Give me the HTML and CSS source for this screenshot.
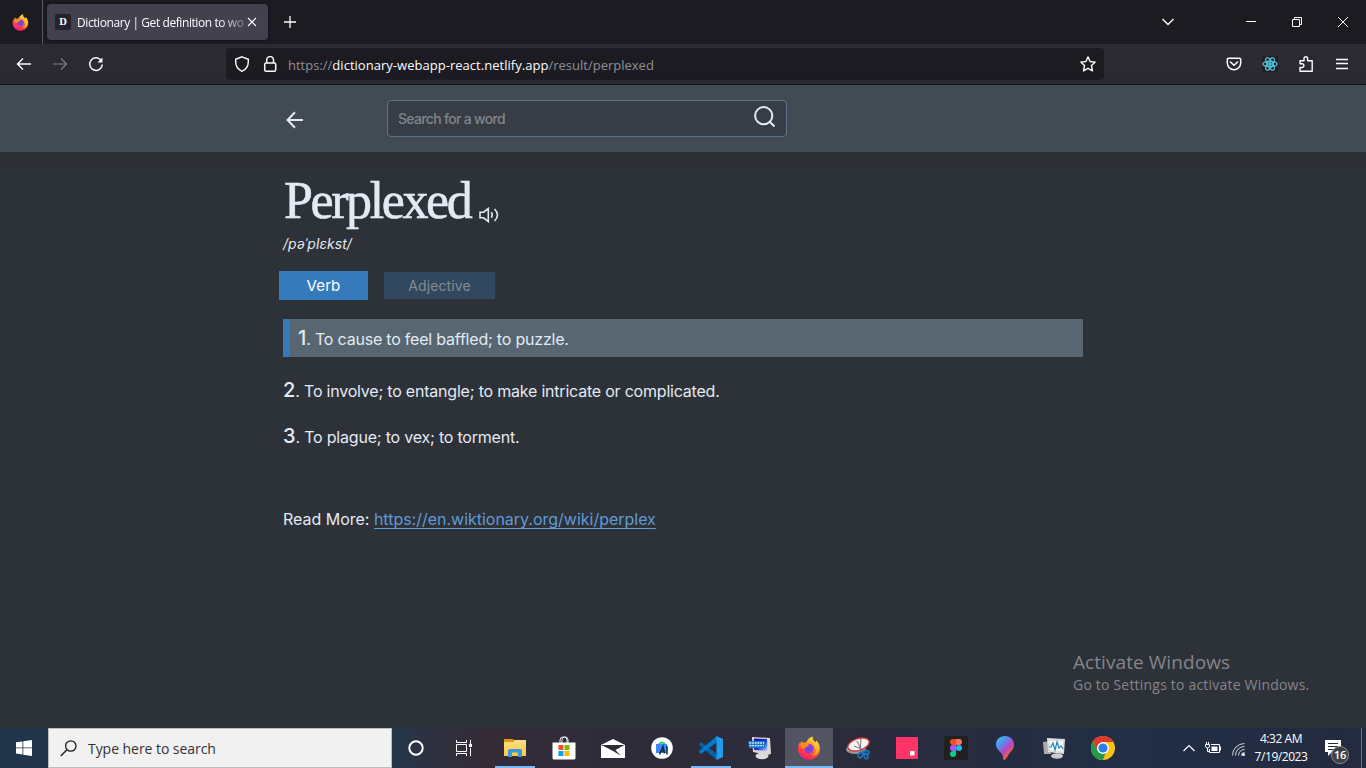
FILE: index.html
```html
<!DOCTYPE html>
<html lang="en">
<head>
<meta charset="utf-8">
<title>Dictionary | Get definition to words</title>
<link rel="stylesheet" href="styles.css">
</head>
<body>
<svg class="defs" width="0" height="0">
  <defs>
    <linearGradient id="flame" x1="0.8" y1="0" x2="0.3" y2="1"><stop offset="0" stop-color="#fff04a"/><stop offset=".4" stop-color="#ff9a20"/><stop offset=".7" stop-color="#ff4139"/><stop offset="1" stop-color="#f5158c"/></linearGradient>
    <radialGradient id="globe"><stop offset="0" stop-color="#5a4ae0"/><stop offset="1" stop-color="#a03bd8"/></radialGradient>
    <linearGradient id="screen" x1="0" y1="0" x2="1" y2="1"><stop offset="0" stop-color="#0713a8"/><stop offset=".55" stop-color="#1c35d8"/><stop offset="1" stop-color="#c8d8ff"/></linearGradient>
    <linearGradient id="paint" x1="0" y1="0" x2=".8" y2="1"><stop offset="0" stop-color="#22d5ee"/><stop offset=".35" stop-color="#5a8cf0"/><stop offset=".6" stop-color="#b646c8"/><stop offset=".85" stop-color="#f0632f"/><stop offset="1" stop-color="#ffc629"/></linearGradient>
    <linearGradient id="folder" x1="0" y1="0" x2="0" y2="1"><stop offset="0" stop-color="#ffe08a"/><stop offset="1" stop-color="#fbc93f"/></linearGradient>
    <symbol id="firefox" viewBox="0 0 24 24">
      <path fill="url(#flame)" d="M16 0.5c-.8 2-.2 3.300 1.500 4.700l1.200 1.300.6-2.100c2.300 2 3.800 5.200 3.600 8.800C22.600 19.300 18 23.600 12 23.600 5.600 23.600 1 19 1 13c0-2.900.8-5.300 2.200-7.400l.3 2.100 1.300-3 .9 2.200c1.100-.5 2.200-.6 3.300-.3 1.400-3 4-5.600 7-6.100z"/>
      <circle cx="12" cy="12.600" r="4.800" fill="url(#globe)"/>
      <path fill="#ff8b1d" d="M4 7.200l4.700-.1 3.300 1.700c-.2 1.500-1.500 1.900-3.300 2.100l-1 1.600c-1.600.7-2.700-.4-3.900-1.500z"/>
      <path fill="#ffcb35" d="M14.500 4.500c2.500 2 4.200 4.600 3.700 8.300 1-1 1.200-2 1.100-3 1.200 5-1 9-5 10 6-.4 8-5 7.200-9-.5-2.600-2-4-3.500-4.600z" opacity=".8"/>
    </symbol>
  </defs>
</svg>

<div class="tabbar">
  <div class="pinned"><svg width="17" height="17"><use href="#firefox"/></svg></div>
  <div class="tab">
    <span class="favicon">D</span>
    <span class="tab-title">Dictionary | Get definition to wo</span>
    <svg class="stroke" width="10" height="10" viewBox="0 0 10 10" stroke-width="1.1"><path d="M1 1l8 8M9 1l-8 8"/></svg>
  </div>
  <svg class="stroke new-tab" width="12" height="12" viewBox="0 0 12 12" stroke-width="1.3"><path d="M6 0v12M0 6h12"/></svg>
  <div class="window-controls">
    <svg class="stroke list" width="14" height="8" viewBox="0 0 14 8" stroke-width="1.4"><path d="M1.500 1L7 6.500 12.500 1"/></svg>
    <svg class="stroke" width="10" height="10" viewBox="0 0 10 10"><path d="M0 4.500h10"/></svg>
    <svg class="stroke" width="10" height="10" viewBox="0 0 10 10"><path d="M.5 2.500h7v7h-7zM2.500 2.500v-2h7v7h-2"/></svg>
    <svg class="stroke" width="10" height="10" viewBox="0 0 10 10"><path d="M0 0l10 10M10 0L0 10"/></svg>
  </div>
</div>

<div class="toolbar">
  <div class="nav">
    <svg class="stroke" width="16" height="16" viewBox="0 0 16 16" stroke-width="1.4"><path d="M15 8H1.500M7 2.500L1.500 8 7 13.500"/></svg>
    <svg class="stroke dim" width="16" height="16" viewBox="0 0 16 16" stroke-width="1.200"><path d="M1 8h13.500M9 2.500L14.500 8 9 13.500"/></svg>
    <svg class="stroke" width="16" height="16" viewBox="0 0 16 16" stroke-width="1.500"><path d="M13 4.200A6.300 6.300 0 1 0 14.300 8.500"/><path d="M14.500 1.500v5h-5z" fill="#fbfbfe" stroke="none"/></svg>
  </div>
  <div class="urlbar">
    <svg class="stroke" width="16" height="16" viewBox="0 0 16 16" stroke-width="1.400"><path d="M8 .8l6.300 2.500v2.500C14.300 10.500 12 13.500 8 15.300 4 13.500 1.700 10.500 1.700 5.800V3.300z"/></svg>
    <svg class="stroke" width="16" height="16" viewBox="0 0 16 16" stroke-width="1.500"><rect x="2.700" y="7" width="11" height="8.200" rx="1.500"/><path d="M4.700 7V4a3.400 3.400 0 0 1 6.800 0v3"/></svg>
    <span class="url">https://<b>dictionary-webapp-react.netlify.app</b>/result/perplexed</span>
    <svg class="stroke star" width="16" height="16" viewBox="0 0 16 16" stroke-width="1.400" stroke-linejoin="round"><path d="M8 .9l2.100 4.600 5.100.6-3.700 3.500 1 5.300L8 12.300l-4.500 2.600 1-5.300L.8 6.100l5.100-.6z"/></svg>
  </div>
  <div class="extensions">
    <svg class="stroke" width="16" height="16" viewBox="0 0 16 16" stroke-width="1.500"><path d="M2.500 2.200h11a1.200 1.200 0 0 1 1.200 1.200V7A6.700 6.700 0 0 1 1.300 7V3.400a1.200 1.200 0 0 1 1.200-1.200zM4.500 6L8 9.200 11.500 6" stroke-linecap="round"/></svg>
    <svg width="16" height="16" viewBox="0 0 16 16" fill="none" stroke="#53c1de"><path d="M0 0h16v16H0z" fill="#202020" stroke="none"/><g stroke-width="1.200"><ellipse cx="8" cy="8" rx="7" ry="2.700"/><ellipse cx="8" cy="8" rx="7" ry="2.700" transform="rotate(60 8 8)"/><ellipse cx="8" cy="8" rx="7" ry="2.700" transform="rotate(120 8 8)"/></g><circle cx="8" cy="8" r="1.300" fill="#53c1de"/></svg>
    <svg class="stroke" width="16" height="16" viewBox="0 0 16 16" stroke-width="1.400"><path d="M2 15.200v-3.700h2a1.900 1.900 0 1 0 0-3.800H2V4.800h4V2.500a1.800 1.800 0 0 1 3.600 0v2.300h4.600v10.400z" stroke-linejoin="round"/></svg>
    <svg class="stroke" width="16" height="16" viewBox="0 0 16 16" stroke-width="1.300"><path d="M2 3.500h12M2 7.500h12M2 12.500h12"/></svg>
  </div>
</div>

<header class="app-header">
  <svg class="back" width="18" height="18" viewBox="0 0 18 18"><path d="M17 9H2M9 1.200L1.500 9 9 16.800"/></svg>
  <div class="search">
    <span>Search for a word</span>
    <svg width="22" height="22" viewBox="0 0 22 22"><circle cx="9.700" cy="9.700" r="8.600"/><path d="M15.500 15.500l5 5"/></svg>
  </div>
</header>

<main class="result">
  <div class="word-row">
    <h1>Perplexed</h1>
    <svg class="speaker" width="20" height="16" viewBox="0 0 20 16"><path d="M1 5.200h3.500L9.300 1.500v13L4.500 10.800H1z"/><path d="M12.300 5.200q1.800 2.800 0 5.600M15.500 2q6 6 0 12"/></svg>
  </div>
  <p class="phonetic">/pəˈplɛkst/</p>
  <div class="parts">
    <button class="part active">Verb</button>
    <button class="part">Adjective</button>
  </div>
  <ol class="meanings">
    <li class="selected"><b>1</b>. To cause to feel baffled; to puzzle.</li>
    <li><b>2</b>. To involve; to entangle; to make intricate or complicated.</li>
    <li><b>3</b>. To plague; to vex; to torment.</li>
  </ol>
  <p class="more">Read More: <a>https://en.wiktionary.org/wiki/perplex</a></p>
</main>

<aside class="watermark">
  <div class="wm-title">Activate Windows</div>
  <div class="wm-text">Go to Settings to activate Windows.</div>
</aside>

<footer class="taskbar">
  <div class="start"><svg width="16" height="16" viewBox="0 0 16 16" fill="#fff"><path d="M0 2.300l6.500-.9v6.100H0zM7.300 1.300L16 0v7.500H7.300zM0 8.300h6.500v6.200L0 13.600zM7.300 8.300H16V16l-8.700-1.300z"/></svg></div>
  <div class="task-search">
    <svg width="17" height="17" viewBox="0 0 17 17" fill="none" stroke="#1a1a1a" stroke-width="1.300"><circle cx="10.800" cy="6" r="5.200"/><path d="M7 9.700L.7 16"/></svg>
    <span>Type here to search</span>
  </div>
  <div class="apps">
    <div class="app"><svg width="16" height="16" viewBox="0 0 16 16"><circle cx="8" cy="8" r="6.700" fill="none" stroke="#fff" stroke-width="2"/></svg></div>
    <div class="app"><svg width="16" height="16" viewBox="0 0 16 16" fill="none" stroke="#fff"><path d="M.5 0v2.500h10V0M.5 16v-2.500h10V16M.5 4.500h10v7H.5zM14.500 0v4M14.500 8v8"/><path d="M13 4h3v3h-3z" fill="#fff" stroke="none"/></svg></div>
  </div>
  <div class="apps pinned-apps">
    <div class="app running"><svg width="22" height="18" viewBox="0 0 22 18"><path fill="url(#folder)" d="M0 3h9l1-2h12v16H0z"/><path fill="#e19b06" d="M0 0h8.500l1.500 1-1.500 2H0z"/><path fill="#3b97de" d="M4 18v-6a2 2 0 0 1 2-2h10a2 2 0 0 1 2 2v6h-4v-4.500H8V18z"/></svg></div>
    <div class="app"><svg width="24" height="24" viewBox="0 0 24 24"><path fill="none" stroke="#eee" d="M8 7V4a3 3 0 0 1 3-3h1a3 3 0 0 1 3 3v3M10 7V4.500a3 3 0 0 1 6-1V7"/><path fill="#fff" d="M.5 6.500h23V22a1.500 1.500 0 0 1-1.500 1.500H2A1.500 1.500 0 0 1 .5 22z"/><path fill="#f04f22" d="M6.500 9h5v5h-5z"/><path fill="#7fb900" d="M12.500 9h5v5h-5z"/><path fill="#00a3ef" d="M6.500 15h5v5h-5z"/><path fill="#ffb900" d="M12.500 15h5v5h-5z"/></svg></div>
    <div class="app"><svg width="24" height="19" viewBox="0 0 24 19"><path fill="#fff" d="M0 6L12 0l12 6v13H0z"/><path fill="#2e2a38" d="M.5 6h23l-9 5 5 5.500L12 12z"/></svg></div>
    <div class="app"><svg width="22" height="22" viewBox="0 0 22 22"><circle cx="11" cy="11" r="10.800" fill="#fff"/><path fill="#3bd480" d="M7 7a4.200 3.700 0 0 1 8 0z"/><path fill="#4285f4" d="M5 7h11v9H5z"/><path fill="none" stroke="#083042" stroke-width="1.500" d="M8.500 17.500l3.500-8 1.500 7M10 14h3M16 9v8.500"/></svg></div>
    <div class="app running"><svg width="24" height="24" viewBox="0 0 24 24"><path fill="#0065a9" d="M0 8l2-2 16 12v6L0 9z"/><path fill="#007acc" d="M0 16l2 2L18 6V0L0 15z"/><path fill="#1f9cf0" d="M17.500 0L24 3v18l-6.500 3z"/></svg></div>
    <div class="app"><svg width="24" height="24" viewBox="0 0 24 24"><ellipse cx="14" cy="20" rx="6.500" ry="3.200" fill="#ddd"/><path fill="#ddd9d2" d="M4 1l18 1 1 16-4 1L5 16z"/><path fill="url(#screen)" d="M6 2.500l13 .5.5 12L6 14z"/><path fill="#1c78c9" d="M0 5h17v7H1z"/><path stroke="#e5f3ff" stroke-dasharray="1.700 1" stroke-width="1.300" d="M1.500 7H16M1.500 9.700H16"/></svg></div>
    <div class="app current"><svg width="24" height="24"><use href="#firefox"/></svg></div>
    <div class="app"><svg width="24" height="24" viewBox="0 0 24 24"><ellipse cx="10" cy="13.500" rx="10" ry="4.500" fill="#999"/><ellipse cx="12.500" cy="8.500" rx="11" ry="5.800" transform="rotate(-18 12.500 8.500)" fill="#f4f4f4" stroke="#d93737" stroke-width="1.300"/><path d="M11 5l5 10M15 3l-1 12M8 10l8 3" stroke="#777"/><g fill="none" stroke="#1e70b8" stroke-width="1.800"><ellipse cx="14.500" cy="19" rx="2" ry="3" transform="rotate(25 14.500 19)"/><ellipse cx="20" cy="16.500" rx="3" ry="1.900"/><ellipse cx="20" cy="20" rx="1.800" ry="2.800" transform="rotate(-25 20 20)"/></g></svg></div>
    <div class="app"><svg width="22" height="22" viewBox="0 0 22 22"><path fill="#ff3366" d="M0 0h22v22H0z"/><path fill="#fff" d="M14 14h4.500v4.500H14z"/></svg></div>
    <div class="app"><svg width="24" height="24" viewBox="0 0 24 24"><path fill="#202020" d="M0 0h24v24H0z"/><path fill="#f24e1e" d="M12 3H9a3 3 0 0 0 0 6h3z"/><path fill="#ff7262" d="M12 3h3a3 3 0 0 1 0 6h-3z"/><path fill="#a259ff" d="M12 9H9a3 3 0 0 0 0 6h3z"/><circle cx="15" cy="12" r="3" fill="#1abcfe"/><path fill="#0acf83" d="M12 15H9a3 3 0 1 0 3 3z"/></svg></div>
    <div class="app"><svg width="20" height="24" viewBox="0 0 20 24"><path fill="url(#paint)" d="M10 0c5.500 0 9 4 9 8.500 0 5-3.500 7-6 11-1 2-2.500 4.500-4 4.500s-.5-3.500-1.500-5C5 15 1 13 1 8.500 1 4 4.500 0 10 0z"/></svg></div>
    <div class="app"><svg width="24" height="24" viewBox="0 0 24 24"><path fill="#aaa" d="M1 6l8-1v13H2z"/><ellipse cx="15" cy="20" rx="6" ry="2.800" fill="#ccc"/><path fill="#ddd" d="M5 2l18 1-1 15-16-2z"/><path fill="#f3f8fb" d="M7 4.500l14 .5-.5 10.500L8 14z"/><path fill="none" stroke="#2684bd" stroke-width="1.200" d="M7 11h2l2-4 2 7 2-8 2 6 2-2 2 3"/></svg></div>
    <div class="app"><svg width="24" height="24" viewBox="0 0 24 24"><circle cx="12" cy="12" r="12" fill="#fbc116"/><path fill="#de3a2b" d="M1.600 6A12 12 0 0 1 22.400 6H12L7 15z"/><path fill="#219a4b" d="M1.600 6L7 15l8 .5L12 24A12 12 0 0 1 1.600 6z"/><circle cx="12" cy="12" r="6" fill="#fff"/><circle cx="12" cy="12" r="4.600" fill="#2b7de9"/></svg></div>
  </div>
  <div class="tray">
    <svg class="stroke" width="12" height="8" viewBox="0 0 12 8" stroke-width="1.200"><path d="M.5 7L6 1.500 11.500 7"/></svg>
    <svg class="battery" width="16" height="12" viewBox="0 0 16 12" fill="none" stroke="#fff"><path d="M1.500 0v2M3.500 0v2M.5 2.500h4v1.500q0 2-2 2t-2-2zM2.500 6v3.500h2M6 2.500h8.500v8H4.500V7"/><path fill="#fff" stroke="none" d="M6.500 4.500H12.500v4.500H6.500zM15 4.500h1v4h-1z"/></svg>
    <svg class="wifi" width="13" height="13" viewBox="0 0 13 13" fill="none" stroke="#fff"><path d="M.5 12.500A12 12 0 0 1 12.500.5M3.500 12.500a9 9 0 0 1 9-9M6.500 12.500a6 6 0 0 1 6-6M9.500 12.500a3 3 0 0 1 3-3" opacity=".8"/><circle cx="11.500" cy="11.500" r="1.500" fill="#fff" stroke="none"/></svg>
    <div class="clock"><div>4:32 AM</div><div class="date">7/19/2023</div></div>
    <div class="notify">
      <svg width="16" height="16" viewBox="0 0 16 16"><path fill="#fff" d="M0 0h16v12h-9l-4 4v-4H0z"/><path stroke="#22293d" d="M3 3.500h10M3 6.500h10M3 9.500h6"/></svg>
      <span class="badge">16</span>
    </div>
    <i class="desktop-edge"></i>
  </div>
</footer>
</body>
</html>
```

FILE: styles.css
```css
* { box-sizing: border-box; }
body {
  margin: 0; width: 1366px; height: 768px; overflow: hidden;
  display: flex; flex-direction: column; position: relative;
  background: #2d3138; color: #e3eaf3; font-family: Inter, sans-serif;
}
svg { display: block; flex: none; }
.defs { position: absolute; }
.stroke { fill: none; stroke: #fbfbfe; }
.dim { opacity: .4; }

/* Browser chrome */
.tabbar, .toolbar, .watermark, .taskbar { font-family: "Open Sans", "Noto Sans", sans-serif; }
.tabbar { height: 44px; flex: none; display: flex; align-items: center; background: #1c1b22; }
.pinned { width: 43px; height: 44px; padding-left: 11.500px; display: flex; align-items: center; border-right: 1px solid #5b5a62; }
.tab {
  margin-left: 4px; width: 221px; height: 36px; padding: 0 11px 0 8px; border-radius: 4px;
  display: flex; align-items: center; background: #42414d; box-shadow: 0 0 3px #0008;
}
.favicon {
  width: 16px; height: 16px; border-radius: 2px; background: #23222d; color: #fff;
  font: bold 10.500px/15px "Liberation Serif", serif; text-align: center;
}
.tab-title {
  margin-left: 6px; width: 170px; white-space: nowrap;
  font-size: 12px; letter-spacing: -.42px; color: #fbfbfe;
  mask-image: linear-gradient(to right, #000 84%, #0003 100%);
}
.new-tab { margin-left: 16px; }
.window-controls { margin-left: auto; padding-right: 18px; display: flex; align-items: center; gap: 36px; }
.list { margin-right: 35px; }
.toolbar { height: 41px; flex: none; display: flex; align-items: center; padding-bottom: 1px; background: #2b2a33; border-bottom: 1px solid #0c0c0d; }
.nav { width: 226px; padding-left: 16px; display: flex; gap: 20px; }
.urlbar { width: 878px; height: 32px; padding: 0 8px; border-radius: 4px; background: #1c1b22; display: flex; align-items: center; gap: 12px; }
.url { margin: 2px 0 0 -2px; font-size: 13px; color: #8f8e96; white-space: nowrap; }
.url b { font-weight: 400; letter-spacing: .03px; color: #fbfbfe; }
.star { margin-left: auto; }
.extensions { margin-left: 122px; display: flex; gap: 20px; }

/* Dictionary page */
.app-header { height: 67px; flex: none; display: flex; align-items: flex-start; padding: 15px 0 0 286px; background: #424b54; box-shadow: 0 3px 10px #2c3230; }
.back { margin-top: 11px; fill: none; stroke: #e3eaf3; stroke-width: 2; }
.search { margin-left: 83px; width: 400px; height: 37px; padding: 0 10px; border: 1px solid #5b748a; border-radius: 4px; background: #383d45; display: flex; justify-content: space-between; }
.search span { font-size: 14px; line-height: 36px; letter-spacing: -.68px; font-weight: 500; color: #7f858c; }
.search svg { margin-top: 5px; fill: none; stroke: #e3eaf3; stroke-width: 2; }
.result { width: 800px; margin-left: 283px; padding-top: 19px; }
.word-row { display: flex; height: 61px; }
h1 { margin: 0 0 0 1px; width: 195px; font: 400 52px/60px "Liberation Serif", serif; letter-spacing: -2.400px; -webkit-text-stroke: .6px #e3eaf3; }
.speaker { margin-top: 36px; fill: none; stroke: #e3eaf3; stroke-width: 1.600; }
.phonetic { margin: 3px 0 0; font-size: 14px; line-height: 18px; letter-spacing: .05px; font-style: italic; }
.parts { display: flex; align-items: center; gap: 16px; margin: 18px 0 0 -4px; height: 29px; }
.part { padding: 0; border: 0; width: 111px; height: 27px; font: 400 14px/28px Inter, sans-serif; letter-spacing: .1px; background: #31485e; color: #858c93; }
.part.active { width: 89px; height: 29px; padding-top: 1px; font-size: 15px; line-height: 28px; background: #367abb; color: #fff; }
.meanings { list-style: none; margin: 19px 0 0; padding: 0; font-size: 16px; line-height: 38px; }
.meanings li { height: 38px; white-space: nowrap; margin-bottom: 8px; letter-spacing: -.21px; }
.meanings b { font-size: 20px; font-weight: 500; letter-spacing: 0; }
.meanings .selected { margin-bottom: 14px; padding-left: 8px; border-left: 7px solid #367abb; background: #576671; }
.more { margin: 54px 0 0; font-size: 16px; line-height: 20px; letter-spacing: -.015px; white-space: nowrap; }
.more a { color: #609bd6; text-decoration: underline; text-underline-offset: 3px; }

.watermark { position: absolute; left: 1073px; top: 649px; color: #83868a; white-space: nowrap; }
.wm-title { font-size: 19px; line-height: 26px; letter-spacing: .07px; }
.wm-text { font-size: 14px; line-height: 20px; letter-spacing: .2px; }

/* Windows taskbar */
.taskbar { margin-top: auto; height: 40px; flex: none; display: flex; background: linear-gradient(to right, #22344a 0, #23364a 392px, #30303e 440px, #342b37 490px, #2f2c39 600px, #2b2b3a 800px, #262c40 1000px, #212e45 1130px, #242a3f 1366px); }
.start { width: 48px; display: flex; align-items: center; justify-content: center; }
.task-search { width: 344px; padding-left: 11px; border: 1px solid #bcbcbc; background: #f1f1f1; display: flex; align-items: center; gap: 11px; font-size: 14px; letter-spacing: -.05px; color: #333; }
.apps { display: flex; }
.pinned-apps { margin-left: 3px; gap: 1px; }
.app { width: 48px; height: 40px; display: flex; align-items: center; justify-content: center; }
.running { background: linear-gradient(#76b9ff, #76b9ff) 4px 38px / 40px 2px no-repeat; }
.current { background: linear-gradient(#76b9ff, #76b9ff) 0 38px / 48px 2px no-repeat #535462; }
.tray { margin-left: auto; display: flex; align-items: center; color: #fff; }
.battery { margin-left: 10px; }
.wifi { margin: 2px 0 0 11px; }
.clock { width: 62px; margin-left: 5px; font-size: 12px; line-height: 18px; text-align: center; white-space: nowrap; letter-spacing: -.45px; }
.notify { position: relative; margin-left: 13px; width: 16px; }
.badge { position: absolute; left: 6px; top: 6px; width: 18px; height: 18px; border: 1px solid #8b8d91; border-radius: 50%; background: #3e4044; font-size: 11px; font-weight: 600; line-height: 15px; letter-spacing: -.3px; text-align: center; }
.desktop-edge { margin-left: 20px; width: 1px; height: 40px; margin-right: 4px; background: #6d7180; }
```
